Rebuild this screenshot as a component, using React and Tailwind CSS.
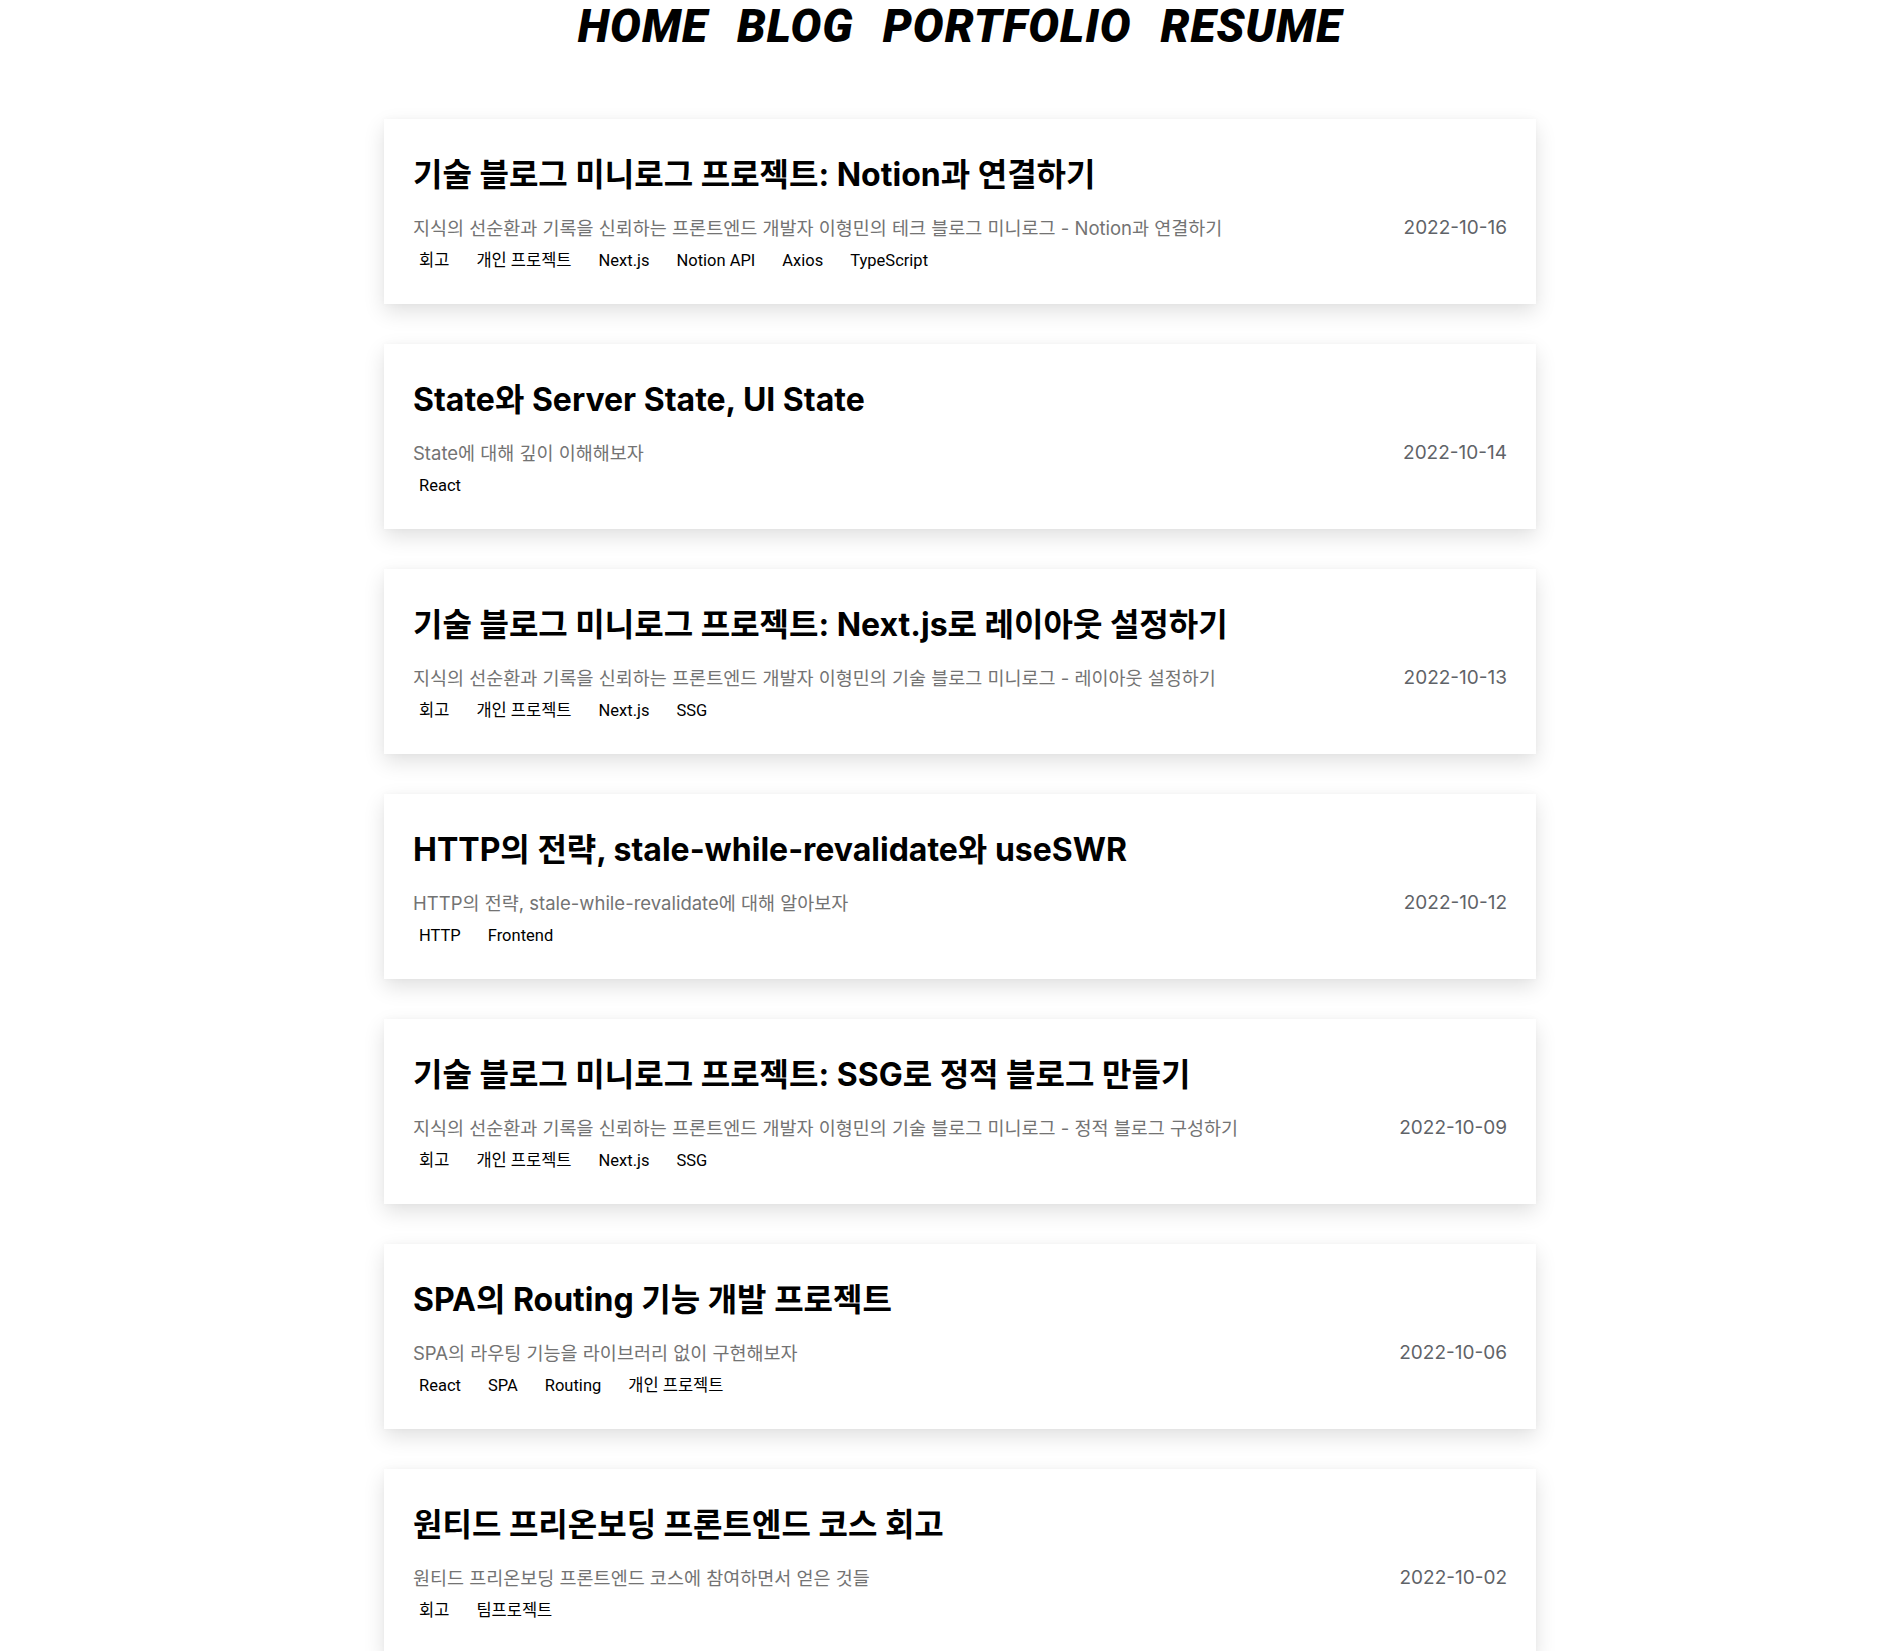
const posts = [
  {
    title: "기술 블로그 미니로그 프로젝트: Notion과 연결하기",
    description:
      "지식의 선순환과 기록을 신뢰하는 프론트엔드 개발자 이형민의 테크 블로그 미니로그 - Notion과 연결하기",
    date: "2022-10-16",
    tags: ["회고", "개인 프로젝트", "Next.js", "Notion API", "Axios", "TypeScript"],
  },
  {
    title: "State와 Server State, UI State",
    description: "State에 대해 깊이 이해해보자",
    date: "2022-10-14",
    tags: ["React"],
  },
  {
    title: "기술 블로그 미니로그 프로젝트: Next.js로 레이아웃 설정하기",
    description:
      "지식의 선순환과 기록을 신뢰하는 프론트엔드 개발자 이형민의 기술 블로그 미니로그 - 레이아웃 설정하기",
    date: "2022-10-13",
    tags: ["회고", "개인 프로젝트", "Next.js", "SSG"],
  },
  {
    title: "HTTP의 전략, stale-while-revalidate와 useSWR",
    description: "HTTP의 전략, stale-while-revalidate에 대해 알아보자",
    date: "2022-10-12",
    tags: ["HTTP", "Frontend"],
  },
  {
    title: "기술 블로그 미니로그 프로젝트: SSG로 정적 블로그 만들기",
    description:
      "지식의 선순환과 기록을 신뢰하는 프론트엔드 개발자 이형민의 기술 블로그 미니로그 - 정적 블로그 구성하기",
    date: "2022-10-09",
    tags: ["회고", "개인 프로젝트", "Next.js", "SSG"],
  },
  {
    title: "SPA의 Routing 기능 개발 프로젝트",
    description: "SPA의 라우팅 기능을 라이브러리 없이 구현해보자",
    date: "2022-10-06",
    tags: ["React", "SPA", "Routing", "개인 프로젝트"],
  },
  {
    title: "원티드 프리온보딩 프론트엔드 코스 회고",
    description: "원티드 프리온보딩 프론트엔드 코스에 참여하면서 얻은 것들",
    date: "2022-10-02",
    tags: ["회고", "팀프로젝트"],
  },
];

const menu = ["HOME", "BLOG", "PORTFOLIO", "RESUME"];

function PostCard({ post }) {
  return (
    <li className="bg-white px-[29px] pt-[36px] pb-[31px] shadow-[0_8px_20px_rgba(0,0,0,0.12),0_0_6px_rgba(0,0,0,0.03)]">
      <h2 className="font-['Inter','Noto_Sans_CJK_KR',sans-serif] text-[32px] leading-[40px] font-bold text-black">
        {post.title}
      </h2>
      <div className="mt-[19px] flex items-center justify-between font-['Inter','Noto_Sans_CJK_KR',sans-serif] leading-[28px]">
        <p className="text-[18.5px] text-[#737373]">{post.description}</p>
        <span className="text-[19px] text-[#5f6368]">{post.date}</span>
      </div>
      <ul className="mt-[7px] flex flex-wrap font-['Roboto','Noto_Sans_CJK_KR',sans-serif] text-[16.5px] leading-[24px] text-black">
        {post.tags.map((tag) => (
          <li key={tag} className="mr-[15px] px-[6px]">
            {tag}
          </li>
        ))}
      </ul>
    </li>
  );
}

export default function App() {
  return (
    <div className="min-h-screen bg-white pl-[18px]">
      <nav>
        <ul className="flex justify-center gap-[29px] font-['Roboto',sans-serif] text-[46px] leading-[52px] font-black italic tracking-[1px] text-black">
          {menu.map((item) => (
            <li key={item}>{item}</li>
          ))}
        </ul>
      </nav>

      <ul className="mx-auto mt-[67px] flex w-[1152px] flex-col gap-[40px] pb-10">
        {posts.map((post) => (
          <PostCard key={post.date} post={post} />
        ))}
      </ul>
    </div>
  );
}
